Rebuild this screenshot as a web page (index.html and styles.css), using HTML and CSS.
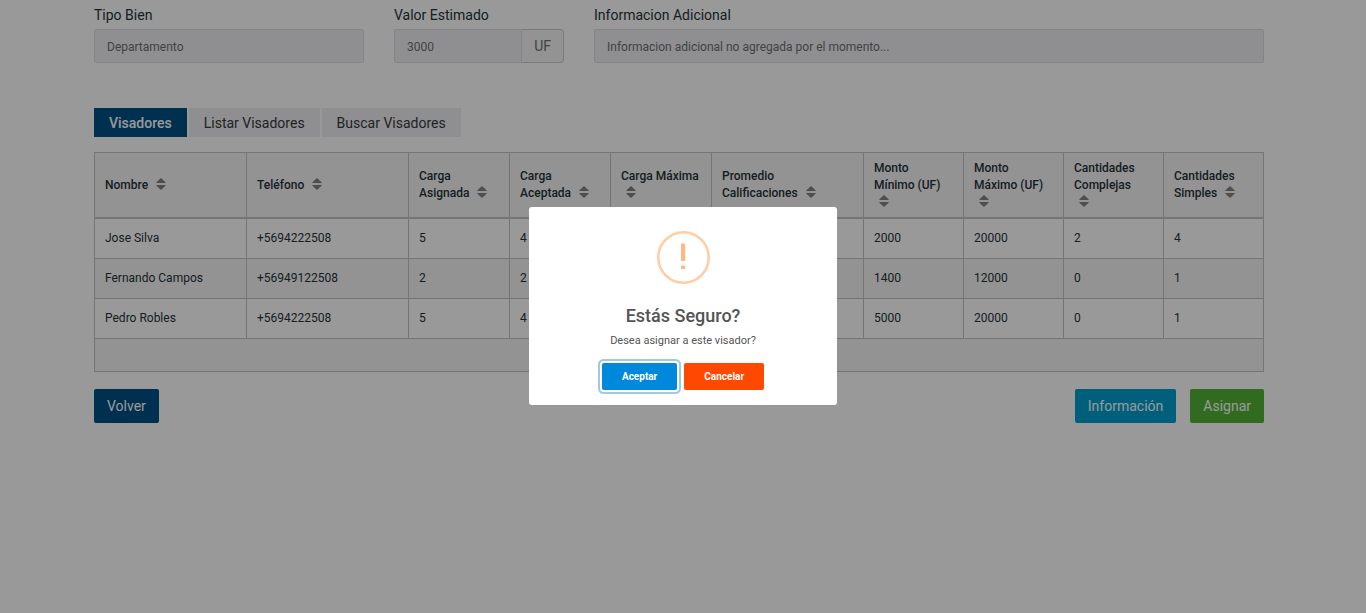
FILE: index.html
```html
<!DOCTYPE html>
<html lang="es">
<head>
<meta charset="utf-8">
<meta name="viewport" content="width=device-width, initial-scale=1">
<title>Asignar visador</title>
<link rel="stylesheet" href="styles.css">
</head>
<body>
<svg class="sprite">
  <symbol id="sort" viewBox="0 0 10 12">
    <path d="M5 0 9.6 4.2Q10 5 9.2 5H.8Q0 5 .4 4.2ZM5 12 9.6 7.8Q10 7 9.2 7H.8Q0 7 .4 7.8Z"/>
  </symbol>
</svg>
<main class="page">
  <div class="container">
    <form class="fields">
      <div class="field field-type">
        <label for="tipo">Tipo Bien</label>
        <input id="tipo" class="control" type="text" value="Departamento" readonly>
      </div>
      <div class="field field-value">
        <label for="valor">Valor Estimado</label>
        <div class="group">
          <input id="valor" class="control" type="text" value="3000" readonly>
          <span class="addon">UF</span>
        </div>
      </div>
      <div class="field field-info">
        <label for="info">Informacion Adicional</label>
        <input id="info" class="control" type="text" value="Informacion adicional no agregada por el momento..." readonly>
      </div>
    </form>

    <nav class="tabs">
      <a class="tab active" href="#visadores">Visadores</a>
      <a class="tab" href="#listar">Listar Visadores</a>
      <a class="tab" href="#buscar">Buscar Visadores</a>
    </nav>

    <table class="grid" id="visadores">
      <colgroup>
        <col class="c-name"><col class="c-phone"><col class="c-load"><col class="c-load"><col class="c-load">
        <col class="c-name"><col class="c-num"><col class="c-num"><col class="c-num"><col class="c-num">
      </colgroup>
      <thead>
        <tr>
          <th>Nombre <svg class="sort"><use href="#sort"/></svg></th>
          <th>Teléfono <svg class="sort"><use href="#sort"/></svg></th>
          <th>Carga Asignada <svg class="sort"><use href="#sort"/></svg></th>
          <th>Carga Aceptada <svg class="sort"><use href="#sort"/></svg></th>
          <th>Carga Máxima <svg class="sort"><use href="#sort"/></svg></th>
          <th>Promedio Calificaciones <svg class="sort"><use href="#sort"/></svg></th>
          <th>Monto Mínimo (UF) <svg class="sort"><use href="#sort"/></svg></th>
          <th>Monto Máximo (UF) <svg class="sort"><use href="#sort"/></svg></th>
          <th>Cantidades Complejas <svg class="sort"><use href="#sort"/></svg></th>
          <th>Cantidades Simples <svg class="sort"><use href="#sort"/></svg></th>
        </tr>
      </thead>
      <tbody>
        <tr><td>Jose Silva</td><td>+5694222508</td><td>5</td><td>4</td><td></td><td></td><td>2000</td><td>20000</td><td>2</td><td>4</td></tr>
        <tr><td>Fernando Campos</td><td>+56949122508</td><td>2</td><td>2</td><td></td><td></td><td>1400</td><td>12000</td><td>0</td><td>1</td></tr>
        <tr><td>Pedro Robles</td><td>+5694222508</td><td>5</td><td>4</td><td></td><td></td><td>5000</td><td>20000</td><td>0</td><td>1</td></tr>
      </tbody>
      <tfoot>
        <tr><td colspan="10"></td></tr>
      </tfoot>
    </table>

    <div class="actions">
      <button class="btn btn-primary" type="button">Volver</button>
      <div class="actions-end">
        <button class="btn btn-info" type="button">Información</button>
        <button class="btn btn-success" type="button">Asignar</button>
      </div>
    </div>
  </div>
</main>

<div class="overlay">
  <div class="dialog" role="dialog" aria-modal="true" aria-labelledby="dialog-title" aria-describedby="dialog-text">
    <svg class="warning" viewBox="0 0 53 53" aria-hidden="true">
      <circle cx="26.5" cy="26.5" r="25.2" fill="none" stroke="#ffcda6" stroke-width="2.6"/>
      <path d="M24 12.5h4.2v17.5h-4.2ZM24 34.5h4.2v3.6h-4.2Z" fill="#ffb980"/>
    </svg>
    <h2 class="dialog-title" id="dialog-title">Estás Seguro?</h2>
    <p class="dialog-text" id="dialog-text">Desea asignar a este visador?</p>
    <div class="dialog-actions">
      <button class="choice accept" type="button">Aceptar</button>
      <button class="choice cancel" type="button">Cancelar</button>
    </div>
  </div>
</div>
</body>
</html>
```
FILE: styles.css
```css
* {
  box-sizing: border-box;
}

body {
  margin: 0;
  background: #fff;
  color: #263238;
  font: 14px/20px Roboto, "Liberation Sans", sans-serif;
}

button,
input {
  font-family: inherit;
}

.sprite {
  display: none;
}

.page {
  padding: 5px 23px 15px 15px;
}

.container {
  max-width: 1170px;
  margin: 0 auto;
}

/* Form */
.fields {
  display: grid;
  grid-template-columns: repeat(12, 1fr);
  gap: 30px;
}

.field {
  display: flex;
  flex-direction: column;
  gap: 4px;
  min-width: 0;
}

.field-type { grid-column: span 3; }
.field-value { grid-column: span 2; }
.field-info { grid-column: span 7; }

.group {
  display: flex;
}

.control {
  flex: 1;
  width: 100%;
  min-width: 0;
  min-height: 34px;
  padding: 7px 12px 6px;
  border: 1px solid #dcdee0;
  border-radius: 2px;
  background: #eeeef2;
  color: #6f6f70;
  font-size: 12px;
}

.group .control {
  border-radius: 2px 0 0 2px;
}

.addon {
  padding: 6px 12px;
  border: 1px solid #ccc;
  border-left: 0;
  border-radius: 0 4px 4px 0;
  background: #f5f5f5;
  color: #6f6f70;
}

/* Tabs */
.tabs {
  display: flex;
  gap: 2px;
  margin: 45px 0 15px;
}

.tab {
  padding: 5px 15px 4px;
  background: #eeeef2;
  color: #37393b;
  text-decoration: none;
}

.tab.active {
  background: #005085;
  color: #fff;
  font-weight: 500;
}

/* Table */
.grid {
  width: 100%;
  table-layout: fixed;
  border-collapse: collapse;
  font-size: 12px;
  line-height: 17px;
}

.c-name { width: 152px; }
.c-phone { width: 162px; }
.c-load { width: 101px; }
.c-num { width: 100px; }

.grid th,
.grid td {
  border: 1px solid #c4c4c4;
  text-align: left;
}

.grid th {
  height: 65px;
  padding: 6px 12px 5px 10px;
  border-bottom-width: 2px;
  font-weight: 500;
}

.grid td {
  height: 40px;
  padding: 11px 10px;
}

.grid thead,
.grid tfoot,
.grid tbody tr:nth-child(even) {
  background: #f5f5f5;
}

.grid tfoot td {
  height: 33px;
  padding: 0;
}

.sort {
  width: 10px;
  height: 12px;
  margin: 0 5px;
  fill: #838383;
  vertical-align: -1px;
}

/* Page actions */
.actions {
  display: flex;
  justify-content: space-between;
  margin-top: 17px;
}

.actions-end {
  display: flex;
  gap: 14px;
}

.btn {
  padding: 7px 13px;
  border: 0;
  border-radius: 2px;
  color: #fff;
  font-size: 14px;
  line-height: 20px;
}

.btn-primary { background: #005085; }
.btn-info { background: #00a0cf; }
.btn-success { background: #53b335; }

/* Dialog */
.overlay {
  position: fixed;
  inset: 0;
  display: flex;
  align-items: center;
  justify-content: center;
  padding-bottom: 1px;
  background: rgba(0, 0, 0, 0.4);
}

.dialog {
  display: flex;
  flex-direction: column;
  align-items: center;
  width: 308px;
  max-width: 90%;
  padding: 24px 12px 15px;
  border-radius: 3px;
  background: #fff;
  color: #545454;
  text-align: center;
}

.warning {
  width: 53px;
  height: 53px;
}

.dialog-title {
  margin: 20px 0 0;
  font-size: 18px;
  font-weight: 500;
  line-height: 24px;
}

.dialog-text {
  margin: 5px 0 14px;
  font-size: 11px;
  line-height: 16px;
}

.dialog-actions {
  display: flex;
  gap: 7px;
}

.choice {
  padding: 6px 20px;
  border: 0;
  border-radius: 2px;
  color: #fff;
  font-size: 10px;
  font-weight: 700;
  line-height: 15px;
}

.accept {
  background: #0088dd;
  box-shadow: 0 0 0 2px #fff, 0 0 0 4px #a5c8df;
}

.cancel {
  background: #ff4800;
}
```
